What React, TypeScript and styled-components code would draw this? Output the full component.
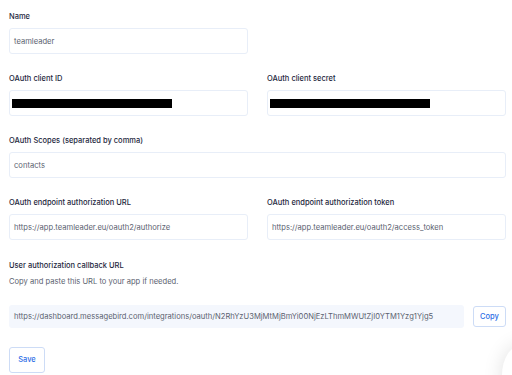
import React from "react";
import styled, { createGlobalStyle } from "styled-components";

const Global = createGlobalStyle`
  html, body { margin: 0; padding: 0; background: #ffffff; }
  body { font-family: Inter, "Noto Sans", sans-serif; -webkit-font-smoothing: antialiased; }
`;

const Page = styled.div`
  width: 512px;
  height: 375px;
  box-sizing: border-box;
  padding: 12px 6px 0 9px;
  display: flex;
  flex-direction: column;
  gap: 20px;
  overflow: hidden;
  position: relative;
`;

const Row = styled.div`
  display: grid;
  grid-template-columns: 239px 239px;
  column-gap: 19px;
`;

const Field = styled.div<{ $shift?: number }>`
  display: flex;
  flex-direction: column;
  margin-top: ${(p) => p.$shift ?? 0}px;
`;

const Label = styled.div<{ $flush?: boolean }>`
  font-size: 7.5px;
  line-height: 10px;
  height: 10px;
  font-weight: 500;
  color: #1d2740;
  margin-bottom: ${(p) => (p.$flush ? 0 : 6)}px;
  white-space: nowrap;
`;

const Input = styled.div`
  height: 26px;
  box-sizing: border-box;
  border: 1px solid #e8eef8;
  border-radius: 3px;
  background: #ffffff;
  padding: 0 4px;
  display: flex;
  align-items: center;
  font-size: 7.6px;
  color: #5b6270;
  white-space: nowrap;
`;

const Redacted = styled.div<{ $w: number }>`
  width: ${(p) => p.$w}px;
  height: 9px;
  background: #000000;
  margin-left: -2px;
`;

const Description = styled.div`
  font-size: 7.6px;
  line-height: 10px;
  color: #5b6270;
  margin-top: 6px;
  white-space: nowrap;
`;

const CopyRow = styled.div`
  display: flex;
  align-items: center;
  gap: 9px;
  margin-top: 18px;
`;

const UrlBox = styled.div`
  width: 455px;
  height: 23px;
  box-sizing: border-box;
  background: #f4f7fd;
  border-radius: 3px;
  padding: 0 5px;
  display: flex;
  align-items: center;
  font-size: 7.6px;
  color: #5b6270;
  white-space: nowrap;
  overflow: hidden;
`;

const Button = styled.button<{ $w: number; $h: number }>`
  width: ${(p) => p.$w}px;
  height: ${(p) => p.$h}px;
  box-sizing: border-box;
  border: 1px solid #cddcf6;
  border-radius: 3px;
  background: #ffffff;
  color: #2f6fe6;
  font-family: Inter, "Noto Sans", sans-serif;
  font-size: 7.5px;
  font-weight: 500;
  padding: 0;
  cursor: pointer;
`;

const SaveWrap = styled.div`
  margin-top: -2px;
`;

const Shadow = styled.div`
  position: absolute;
  right: -30px;
  bottom: -30px;
  width: 40px;
  height: 60px;
  border-radius: 50%;
  box-shadow: 0 0 20px rgba(0, 0, 0, 0.12);
`;

export default function App() {
  return (
    <>
      <Global />
      <Page>
        <Row>
          <Field>
            <Label>Name</Label>
            <Input>teamleader</Input>
          </Field>
        </Row>
        <Row>
          <Field>
            <Label>OAuth client ID</Label>
            <Input>
              <Redacted $w={160} />
            </Input>
          </Field>
          <Field>
            <Label>OAuth client secret</Label>
            <Input>
              <Redacted $w={160} />
            </Input>
          </Field>
        </Row>
        <Field>
          <Label>OAuth Scopes (separated by comma)</Label>
          <Input>contacts</Input>
        </Field>
        <Row>
          <Field>
            <Label>OAuth endpoint authorization URL</Label>
            <Input>https://app.teamleader.eu/oauth2/authorize</Input>
          </Field>
          <Field>
            <Label>OAuth endpoint authorization token</Label>
            <Input>https://app.teamleader.eu/oauth2/access_token</Input>
          </Field>
        </Row>
        <Field $shift={1}>
          <Label $flush>User authorization callback URL</Label>
          <Description>Copy and paste this URL to your app if needed.</Description>
          <CopyRow>
            <UrlBox>
              https://dashboard.messagebird.com/integrations/oauth/N2RhYzU3MjMtMjBmYi00NjEzLThmMWUtZjI0YTM1Yzg1Yjg5
            </UrlBox>
            <Button $w={33} $h={21}>Copy</Button>
          </CopyRow>
        </Field>
        <SaveWrap>
          <Button $w={36} $h={26}>Save</Button>
        </SaveWrap>
        <Shadow />
      </Page>
    </>
  );
}
